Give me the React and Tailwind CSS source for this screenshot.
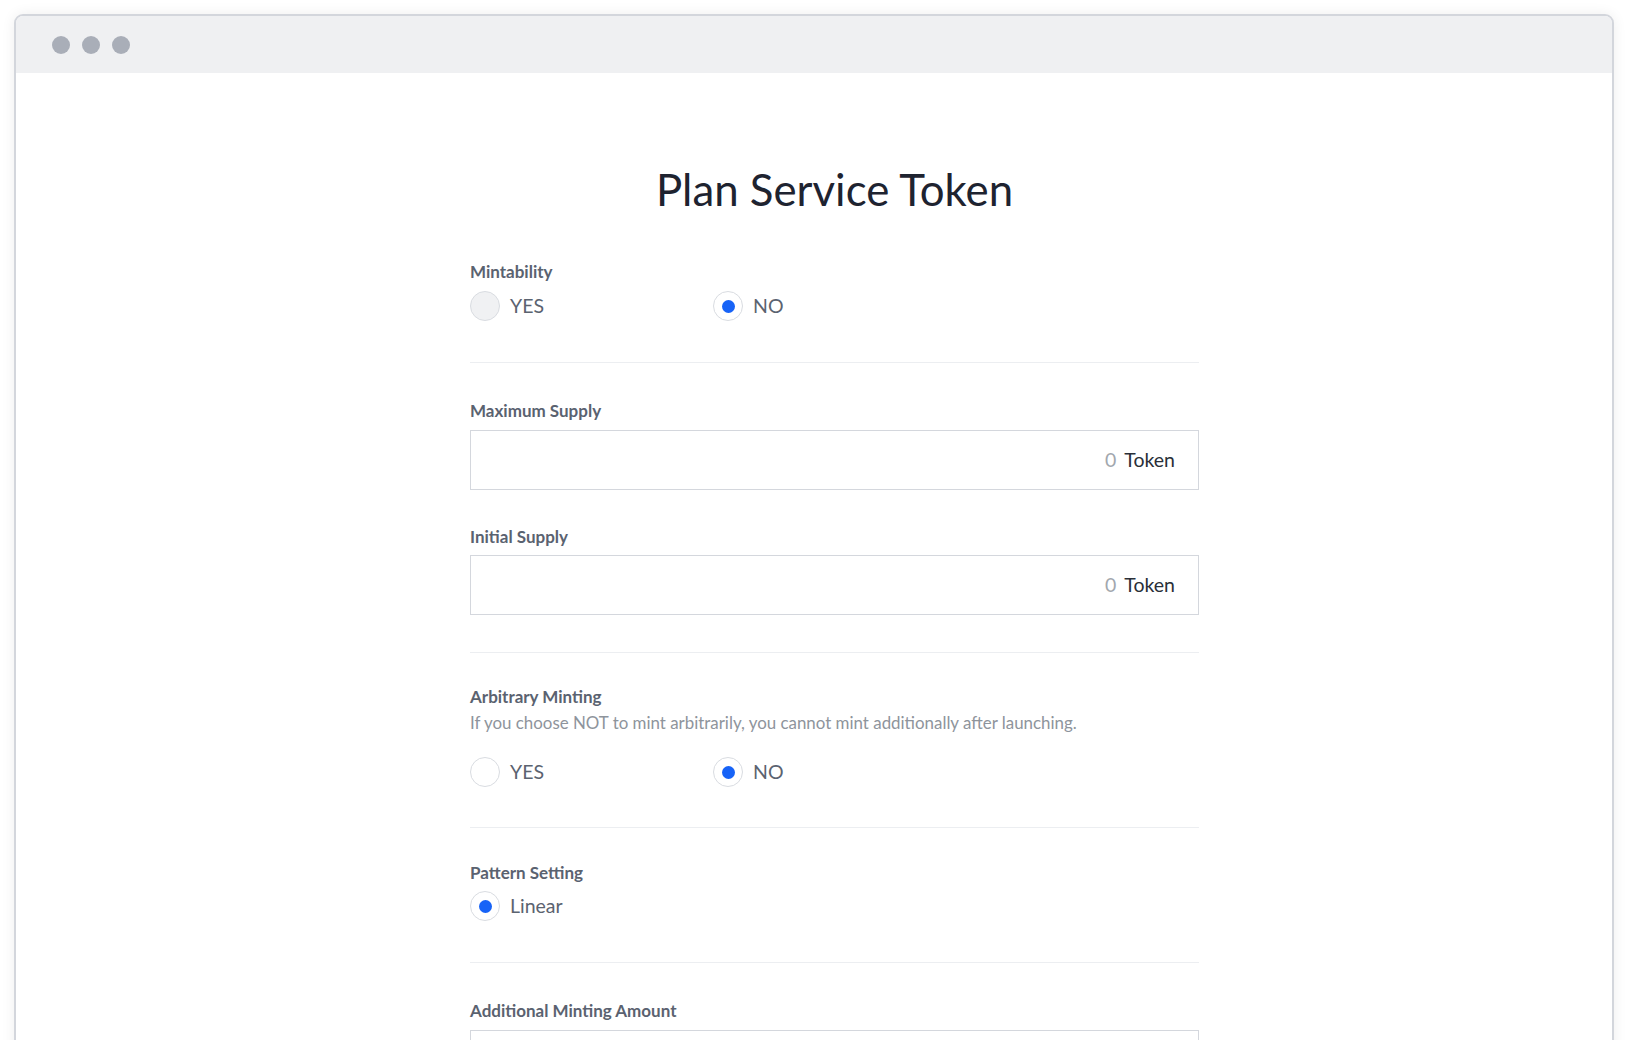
import React from 'react';

const Radio = ({ checked, muted, label }) => (
  <div className="flex items-center gap-[10px]">
    <span
      className={`flex h-[30px] w-[30px] items-center justify-center rounded-full border-[1.5px] border-[#d9dce1] ${
        muted ? 'bg-[#f0f1f3]' : 'bg-white'
      }`}
    >
      {checked && <span className="h-[13px] w-[13px] rounded-full bg-[#1763f7]" />}
    </span>
    <span className="text-[19.5px] leading-[24px] text-[#5b6370]">{label}</span>
  </div>
);

const Label = ({ children }) => (
  <div className="text-[17px] font-bold leading-[20px] text-[#5a6270]">{children}</div>
);

const TokenInput = ({ empty }) => (
  <div className="flex h-[60px] items-center justify-end gap-[8px] border border-[#d4d7dd] bg-white pr-[23px] text-[19.5px]">
    {!empty && <span className="text-[#a2a7ae]">0</span>}
    {!empty && <span className="text-[#2a2f38]">Token</span>}
  </div>
);

const Divider = () => <div className="h-px bg-[#eceef1]" />;

export default function App() {
  return (
    <div className="h-[1040px] overflow-hidden bg-white px-[14px] pt-[14px] font-['Lato','Open_Sans',sans-serif]">
      <div className="min-h-[1100px] rounded-t-[9px] border-2 border-[#d3d6dc] bg-white shadow-[0_0_14px_rgba(0,0,0,0.07)]">
        {/* Window title bar */}
        <div className="flex h-[57px] items-center gap-[12px] rounded-t-[7px] bg-[#eff0f2] pl-[36px]">
          <span className="h-[18px] w-[18px] rounded-full bg-[#a9aeb8]" />
          <span className="h-[18px] w-[18px] rounded-full bg-[#a9aeb8]" />
          <span className="h-[18px] w-[18px] rounded-full bg-[#a9aeb8]" />
        </div>

        <div className="ml-[454px] w-[729px] pt-[89px]">
          <h1 className="text-center text-[43.8px] leading-[55px] text-[#1e2330]">Plan Service Token</h1>

          {/* Mintability */}
          <div className="pb-[41px] pt-[45px]">
            <Label>Mintability</Label>
            <div className="mt-[9px] flex">
              <div className="w-[243px]">
                <Radio muted label="YES" />
              </div>
              <Radio checked label="NO" />
            </div>
          </div>
          <Divider />

          {/* Supply */}
          <div className="pb-[37px] pt-[38px]">
            <Label>Maximum Supply</Label>
            <div className="mt-[9px]">
              <TokenInput />
            </div>
            <div className="mt-[37px]">
              <Label>Initial Supply</Label>
            </div>
            <div className="mt-[8px]">
              <TokenInput />
            </div>
          </div>
          <Divider />

          {/* Arbitrary Minting */}
          <div className="pb-[40px] pt-[34px]">
            <Label>Arbitrary Minting</Label>
            <p className="mt-[6px] text-[16.9px] leading-[20px] text-[#8e949c]">
              If you choose NOT to mint arbitrarily, you cannot mint additionally after launching.
            </p>
            <div className="mt-[24px] flex">
              <div className="w-[243px]">
                <Radio label="YES" />
              </div>
              <Radio checked label="NO" />
            </div>
          </div>
          <Divider />

          {/* Pattern Setting */}
          <div className="pb-[41px] pt-[35px]">
            <Label>Pattern Setting</Label>
            <div className="mt-[8px] flex">
              <Radio checked label="Linear" />
            </div>
          </div>
          <Divider />

          {/* Additional Minting Amount */}
          <div className="pt-[38px]">
            <Label>Additional Minting Amount</Label>
            <div className="mt-[9px]">
              <TokenInput empty />
            </div>
          </div>
        </div>
      </div>
    </div>
  );
}
